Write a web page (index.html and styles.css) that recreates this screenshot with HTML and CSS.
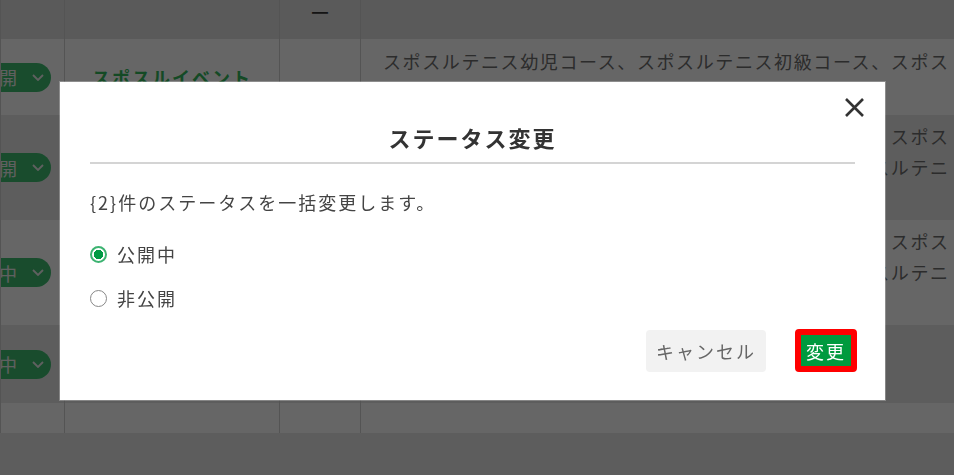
FILE: index.html
```html
<!DOCTYPE html>
<html lang="ja">
<head>
  <meta charset="UTF-8" />
  <meta name="viewport" content="width=device-width, initial-scale=1.0"/>
  <title>ステータス変更</title>
  <link rel="stylesheet" href="styles.css">
</head>
<body>

  <!-- 一覧 -->
  <div class="tabla">
    <div class="fila cabecera">
      <div class="celda c-estado"></div>
      <div class="celda c-nombre"></div>
      <div class="celda c-marca">ー</div>
      <div class="celda c-curso"></div>
    </div>

    <div class="fila">
      <div class="celda c-estado">
        <span class="pill">非公開<svg width="12" height="7" viewBox="0 0 12 7"><polyline points="1,1 6,6 11,1" /></svg></span>
      </div>
      <div class="celda c-nombre"><span class="evento">スポスルイベント</span></div>
      <div class="celda c-marca"></div>
      <div class="celda c-curso">スポスルテニス幼児コース、スポスルテニス初級コース、スポスルテニス中級コース</div>
    </div>

    <div class="fila gris">
      <div class="celda c-estado">
        <span class="pill">非公開<svg width="12" height="7" viewBox="0 0 12 7"><polyline points="1,1 6,6 11,1" /></svg></span>
      </div>
      <div class="celda c-nombre"><span class="evento">スポスルキャンプ</span></div>
      <div class="celda c-marca"></div>
      <div class="celda c-curso">スポスルテニス幼児コース、スポスルテニス初級コース、スポスルテニス中級コース、スポスルテニス上級コース、スポスルテニス選手コース</div>
    </div>

    <div class="fila">
      <div class="celda c-estado">
        <span class="pill">公開中<svg width="12" height="7" viewBox="0 0 12 7"><polyline points="1,1 6,6 11,1" /></svg></span>
      </div>
      <div class="celda c-nombre"><span class="evento">スポスル体験会</span></div>
      <div class="celda c-marca"></div>
      <div class="celda c-curso">スポスルテニス幼児コース、スポスルテニス初級コース、スポスルテニス中級コース、スポスルテニス上級コース、スポスルテニス選手コース</div>
    </div>

    <div class="fila gris">
      <div class="celda c-estado">
        <span class="pill">公開中<svg width="12" height="7" viewBox="0 0 12 7"><polyline points="1,1 6,6 11,1" /></svg></span>
      </div>
      <div class="celda c-nombre"><span class="evento">スポスル大会</span></div>
      <div class="celda c-marca"></div>
      <div class="celda c-curso">スポスルテニス幼児コース</div>
    </div>

    <div class="fila vacia">
      <div class="celda c-estado"></div>
      <div class="celda c-nombre"></div>
      <div class="celda c-marca"></div>
      <div class="celda c-curso"></div>
    </div>
  </div>

  <!-- モーダル -->
  <div class="overlay">
    <div class="modal">
      <button class="cerrar" aria-label="閉じる">
        <svg width="23" height="23" viewBox="0 0 23 23"><path d="M3 3 L20 20 M20 3 L3 20" /></svg>
      </button>
      <div class="modal-titulo">ステータス変更</div>
      <p class="modal-texto">{2}件のステータスを一括変更します。</p>

      <div class="opciones">
        <label class="opcion"><input type="radio" name="estado" checked> 公開中</label>
        <label class="opcion"><input type="radio" name="estado"> 非公開</label>
      </div>

      <div class="acciones">
        <button class="boton boton-cancelar">キャンセル</button>
        <button class="boton boton-cambiar">変更</button>
      </div>
    </div>
  </div>

</body>
</html>
```

FILE: styles.css
```css
body {
  margin: 0;
  font-family: "Noto Sans CJK JP", "Noto Sans", sans-serif;
  background: #e8e8e8;
  overflow: hidden;
}

.tabla {
  width: 980px;
}

.fila {
  display: grid;
  grid-template-columns: 64px 215px 81px 620px;
  min-height: 76px;
  background: #fff;
}

.fila.gris {
  background: #e9e9e9;
  min-height: 78px;
}

.fila.cabecera {
  background: #e0e0e0;
  min-height: 39px;
  height: 39px;
}

.fila.vacia {
  min-height: 30px;
}

.celda {
  border-left: 1px solid #d2d2d2;
  display: flex;
  align-items: center;
}

.c-estado {
  justify-content: flex-end;
  padding-right: 13px;
  overflow: hidden;
}

.pill {
  flex-shrink: 0;
  display: inline-flex;
  align-items: center;
  gap: 13px;
  height: 29px;
  padding: 0 7px 0 14px;
  border-radius: 15px;
  background: #3fbf72;
  color: #f0f0f0;
  font-size: 18px;
  letter-spacing: 2px;
  white-space: nowrap;
}

.pill svg polyline {
  fill: none;
  stroke: #f0f0f0;
  stroke-width: 1.8;
}

.c-nombre {
  justify-content: center;
}

.evento {
  color: #34b85c;
  font-weight: bold;
  font-size: 18px;
  letter-spacing: 2px;
}

.c-marca {
  justify-content: center;
}

.cabecera .c-marca {
  align-items: flex-start;
  font-size: 20px;
  line-height: 26px;
  color: #333;
}

.c-curso {
  padding: 6px 21px 6px 22px;
  font-size: 18px;
  letter-spacing: 1.6px;
  line-height: 31px;
  color: #6e6e6e;
}

/* modal */
.overlay {
  position: fixed;
  inset: 0;
  background: rgba(0, 0, 0, 0.6);
}

.modal {
  position: absolute;
  left: 60px;
  top: 82px;
  width: 825px;
  box-sizing: border-box;
  background: #fff;
  padding: 0 28px 28px 30px;
  box-shadow: 0 0 0 1px rgba(255, 255, 255, 0.25);
}

.cerrar {
  position: absolute;
  top: 14px;
  right: 19px;
  width: 23px;
  height: 23px;
  padding: 0;
  border: none;
  background: none;
  cursor: pointer;
}

.cerrar svg {
  display: block;
}

.cerrar path {
  stroke: #333;
  stroke-width: 2.6;
  fill: none;
}

.modal-titulo {
  padding: 39px 0 9px;
  margin-right: 2px;
  border-bottom: 2px solid #d4d4d4;
  text-align: center;
  font-size: 22px;
  font-weight: bold;
  line-height: 32px;
  letter-spacing: 2px;
  color: #333;
}

.modal-texto {
  margin: 23px 0 0;
  font-size: 18px;
  letter-spacing: 2px;
  line-height: 30px;
  color: #444;
}

.opciones {
  margin-top: 22px;
  display: flex;
  flex-direction: column;
  gap: 14px;
}

.opcion {
  display: flex;
  align-items: center;
  gap: 10px;
  height: 30px;
  font-size: 18px;
  letter-spacing: 2px;
  color: #444;
  cursor: pointer;
}

.opcion input {
  appearance: none;
  width: 17px;
  height: 17px;
  margin: 0;
  box-sizing: border-box;
  border: 1.5px solid #888;
  border-radius: 50%;
  background: #fff;
}

.opcion input:checked {
  border: 2px solid #3cb371;
  background: radial-gradient(circle, #009a44 0 4.5px, #fff 5px);
}

.acciones {
  margin-top: 16px;
  display: flex;
  justify-content: flex-end;
  align-items: center;
  gap: 29px;
}

.boton {
  height: 42px;
  box-sizing: border-box;
  font-family: inherit;
  font-size: 18px;
  letter-spacing: 2px;
  border-radius: 4px;
  cursor: pointer;
}

.boton-cancelar {
  width: 120px;
  background: #f2f2f2;
  color: #666;
  border: none;
}

.boton-cambiar {
  height: 43px;
  padding: 0 5px;
  background: #009a3e;
  color: #fff;
  border: 6px solid #f00;
}
```
